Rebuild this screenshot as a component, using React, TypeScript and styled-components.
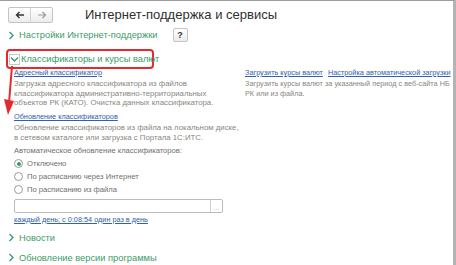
import React from "react";
import styled, { createGlobalStyle } from "styled-components";

const Global = createGlobalStyle`
  html, body { margin: 0; padding: 0; background: #fff; }
  body { font-family: Arial, "Liberation Sans", sans-serif; }
`;

const Frame = styled.div`
  position: relative;
  width: 456px;
  height: 265px;
  box-sizing: border-box;
  border-top: 1px solid #9c9c9c;
  border-right: 3px solid #b4b4b4;
  overflow: hidden;
  background: #fff;
`;

const Header = styled.div`
  display: flex;
  align-items: center;
  padding: 5px 0 0 8px;
  height: 17px;
`;

const NavGroup = styled.div`
  display: flex;
  width: 45px;
  height: 16px;
  border: 1px solid #c4c4c4;
  border-radius: 2px;
  box-sizing: border-box;
  background: linear-gradient(#ffffff, #ececec);
`;

const NavBtn = styled.div<{ $last?: boolean }>`
  flex: 1;
  display: flex;
  align-items: center;
  justify-content: center;
  border-right: ${(p) => (p.$last ? "none" : "1px solid #d2d2d2")};
`;

const Title = styled.div`
  margin-left: 32px;
  font-size: 13px;
  color: #2f2f2f;
  white-space: nowrap;
`;

const Content = styled.div`
  display: flex;
  flex-direction: column;
  padding-left: 8px;
`;

const GroupRow = styled.div<{ $mt: number }>`
  display: flex;
  align-items: center;
  gap: 4px;
  margin-top: ${(p) => p.$mt}px;
  height: 14px;
`;

const GroupTitle = styled.span`
  color: #3b9c68;
  font-size: 9.3px;
  white-space: nowrap;
`;

const Help = styled.div`
  width: 15px;
  height: 14px;
  margin-left: 11px;
  border: 1px solid #c4c4c4;
  border-radius: 2px;
  box-sizing: border-box;
  background: linear-gradient(#ffffff, #ececec);
  display: flex;
  align-items: center;
  justify-content: center;
  font-size: 9px;
  font-weight: bold;
  color: #333;
`;

const Highlight = styled.div`
  display: flex;
  align-items: center;
  gap: 1px;
  margin-top: 7px;
  margin-left: -2px;
  width: 148px;
  height: 20px;
  box-sizing: border-box;
  border: 2px solid #e52a2f;
  border-radius: 4px;
  padding-left: 1px;
`;

const ExpandBox = styled.div`
  width: 11px;
  height: 11px;
  border: 1px solid #c8c8c8;
  box-sizing: border-box;
  display: flex;
  align-items: center;
  justify-content: center;
  flex-shrink: 0;
`;

const Columns = styled.div`
  display: flex;
  padding-left: 6px;
  margin-top: -1px;
`;

const LeftCol = styled.div`
  width: 231px;
  flex-shrink: 0;
  display: flex;
  flex-direction: column;
`;

const RightCol = styled.div`
  display: flex;
  flex-direction: column;
`;

const LinkRow = styled.div`
  display: flex;
  gap: 5px;
`;

const Link = styled.span`
  display: block;
  color: #3060b0;
  text-decoration: underline;
  font-size: 7.3px;
  line-height: 10px;
  white-space: nowrap;
`;

const Desc = styled.div<{ $size?: number }>`
  color: #8a8680;
  font-size: ${(p) => p.$size ?? 7.8}px;
  line-height: 9.7px;
  margin-top: 1px;
  white-space: nowrap;
`;

const Section = styled.div<{ $mt: number }>`
  margin-top: ${(p) => p.$mt}px;
  padding-left: 6px;
  display: flex;
  flex-direction: column;
`;

const Label = styled.div`
  color: #6e6e6e;
  font-size: 7.6px;
  line-height: 10px;
  margin: 3px 0 2px;
  white-space: nowrap;
`;

const RadioRow = styled.div`
  display: flex;
  align-items: center;
  gap: 4px;
  height: 12.7px;
  color: #6e6e6e;
  font-size: 7.6px;
  white-space: nowrap;
`;

const Radio = styled.div<{ $on?: boolean }>`
  width: 9px;
  height: 9px;
  border-radius: 50%;
  border: 1px solid #9a9a9a;
  box-sizing: border-box;
  display: flex;
  align-items: center;
  justify-content: center;
  &::after {
    content: "";
    display: ${(p) => (p.$on ? "block" : "none")};
    width: 4px;
    height: 4px;
    border-radius: 50%;
    background: #3b9c68;
  }
`;

const InputBox = styled.div`
  display: flex;
  width: 209px;
  height: 14px;
  margin-top: 3px;
  border: 1px solid #bcbcbc;
  border-radius: 2px;
  box-sizing: border-box;
`;

const InputField = styled.div`
  flex: 1;
`;

const InputBtn = styled.div`
  width: 11px;
  border-left: 1px solid #cfcfcf;
  display: flex;
  align-items: flex-end;
  justify-content: center;
  color: #aaa;
  font-size: 7px;
  line-height: 9px;
`;

const ScheduleLink = styled(Link)`
  margin-top: 2px;
`;

const Arrow = styled.svg`
  position: absolute;
  left: 3px;
  top: 64px;
`;

const Chevron = () => (
  <svg width="7" height="9" viewBox="0 0 7 9">
    <path d="M1.5 1 L5 4.5 L1.5 8" fill="none" stroke="#3b9c68" strokeWidth="1.4" />
  </svg>
);

export default function App() {
  return (
    <>
      <Global />
      <Frame>
        <Header>
          <NavGroup>
            <NavBtn>
              <svg width="10" height="8" viewBox="0 0 10 8">
                <path d="M9 4 H2 M4.5 1 L1.5 4 L4.5 7" fill="none" stroke="#333" strokeWidth="1.4" />
              </svg>
            </NavBtn>
            <NavBtn $last>
              <svg width="10" height="8" viewBox="0 0 10 8">
                <path d="M1 4 H8 M5.5 1 L8.5 4 L5.5 7" fill="none" stroke="#9a9a9a" strokeWidth="1.2" />
              </svg>
            </NavBtn>
          </NavGroup>
          <Title>Интернет-поддержка и сервисы</Title>
        </Header>
        <Content>
          <GroupRow $mt={5}>
            <Chevron />
            <GroupTitle>Настройки Интернет-поддержки</GroupTitle>
            <Help>?</Help>
          </GroupRow>
          <Highlight>
            <ExpandBox>
              <svg width="9" height="7" viewBox="0 0 9 7">
                <path d="M1 1.5 L4.5 5 L8 1.5" fill="none" stroke="#3b9c68" strokeWidth="1.4" />
              </svg>
            </ExpandBox>
            <GroupTitle>Классификаторы и курсы валют</GroupTitle>
          </Highlight>
          <Columns>
            <LeftCol>
              <Link>Адресный классификатор</Link>
              <Desc>
                Загрузка адресного классификатора из файлов
                <br />
                классификатора административно-территориальных
                <br />
                объектов РК (КАТО). Очистка данных классификатора.
              </Desc>
            </LeftCol>
            <RightCol>
              <LinkRow>
                <Link>Загрузить курсы валют</Link>
                <Link>Настройка автоматической загрузки</Link>
              </LinkRow>
              <Desc $size={7.3}>
                Загрузить курсы валют за указанный период с веб-сайта НБ
                <br />
                РК или из файла.
              </Desc>
            </RightCol>
          </Columns>
          <Section $mt={4}>
            <Link>Обновление классификаторов</Link>
            <Desc>
              Обновление классификаторов из файла на локальном диске,
              <br />
              в сетевом каталоге или загрузка с Портала 1С:ИТС.
            </Desc>
            <Label>Автоматическое обновление классификаторов:</Label>
            <RadioRow>
              <Radio $on />
              Отключено
            </RadioRow>
            <RadioRow>
              <Radio />
              По расписанию через Интернет
            </RadioRow>
            <RadioRow>
              <Radio />
              По расписанию из файла
            </RadioRow>
            <InputBox>
              <InputField />
              <InputBtn>...</InputBtn>
            </InputBox>
            <ScheduleLink>каждый день; с 0:08:54 один раз в день</ScheduleLink>
          </Section>
          <GroupRow $mt={6}>
            <Chevron />
            <GroupTitle>Новости</GroupTitle>
          </GroupRow>
          <GroupRow $mt={6}>
            <Chevron />
            <GroupTitle>Обновление версии программы</GroupTitle>
          </GroupRow>
        </Content>
        <Arrow width="14" height="52" viewBox="0 0 14 52">
          <path d="M9 1 L6 38" stroke="#e52a2f" strokeWidth="2" fill="none" />
          <path d="M1 34 L11 36 L5 50 Z" fill="#e52a2f" />
        </Arrow>
      </Frame>
    </>
  );
}
